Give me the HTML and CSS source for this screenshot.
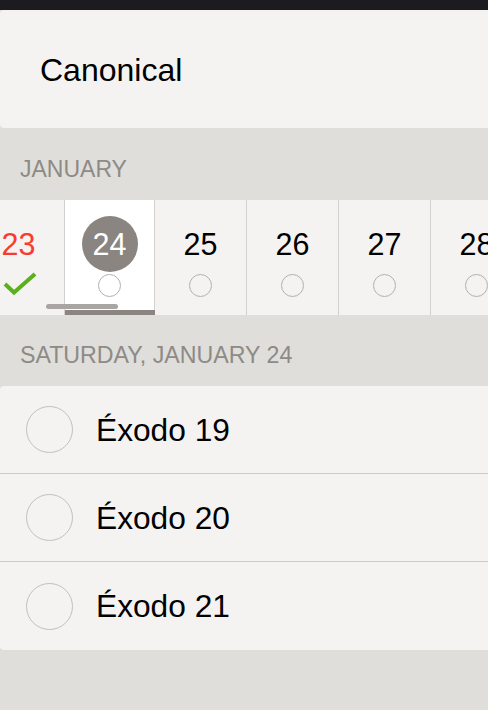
FILE: index.html
```html
<!DOCTYPE html>
<html>
<head>
<meta charset="utf-8">
<link rel="stylesheet" href="styles.css">
</head>
<body>
<div class="topbar"></div>
<div class="title-card"><span class="title">Canonical</span></div>
<div class="section-label">JANUARY</div>
<div class="strip">
  <div class="day">
    <div class="num red">23</div>
    <div class="mark">
      <svg class="check" width="34" height="24" viewBox="0 0 34 24"><path d="M2 12 L11 20.5 L32 2" fill="none" stroke="#5bb11d" stroke-width="4" stroke-linejoin="miter"/></svg>
    </div>
  </div>
  <div class="day selected">
    <div class="num sel"><span class="bubble">24</span></div>
    <div class="mark"><span class="ring"></span></div>
    <div class="underline"></div>
  </div>
  <div class="day">
    <div class="num">25</div>
    <div class="mark"><span class="ring"></span></div>
  </div>
  <div class="day">
    <div class="num">26</div>
    <div class="mark"><span class="ring"></span></div>
  </div>
  <div class="day">
    <div class="num">27</div>
    <div class="mark"><span class="ring"></span></div>
  </div>
  <div class="day">
    <div class="num">28</div>
    <div class="mark"><span class="ring"></span></div>
  </div>
  <div class="scroller"></div>
</div>
<div class="section-label second">SATURDAY, JANUARY 24</div>
<div class="list">
  <div class="row"><span class="circle"></span><span class="label">Éxodo 19</span></div>
  <div class="row"><span class="circle"></span><span class="label">Éxodo 20</span></div>
  <div class="row"><span class="circle"></span><span class="label">Éxodo 21</span></div>
</div>
</body>
</html>
```

FILE: styles.css
```css
html, body {
  margin: 0;
  padding: 0;
}
body {
  width: 488px;
  height: 710px;
  overflow: hidden;
  background: #dfdeda;
  font-family: "Liberation Sans", Arial, sans-serif;
  color: #000;
}
.topbar {
  height: 10px;
  background: #1c1b1f;
}
.title-card {
  height: 118px;
  background: #f4f3f2;
  border-radius: 4px 0 0 4px;
  display: flex;
  align-items: center;
  padding-left: 40px;
}
.title {
  font-size: 32px;
  line-height: 36px;
  position: relative;
  top: 1px;
}
.section-label {
  height: 72px;
  box-sizing: border-box;
  padding: 29px 0 0 20px;
  font-size: 23px;
  line-height: 24px;
  color: #8e8a86;
}
.section-label.second {
  height: 71px;
  font-size: 23.2px;
  padding-top: 28px;
}
.strip {
  position: relative;
  height: 115px;
  display: flex;
  margin-left: -27px;
  width: 560px;
}
.day {
  position: relative;
  flex: 0 0 92px;
  box-sizing: border-box;
  border-right: 1px solid #d3d1ce;
  background: #f4f3f2;
  display: flex;
  flex-direction: column;
  align-items: center;
  padding-top: 16px;
}
.day.selected {
  flex-basis: 90px;
  background: #ffffff;
}
.num {
  height: 56px;
  font-size: 30.5px;
  line-height: 56px;
  text-align: center;
}
.num.red {
  color: #fb3a2f;
}
.bubble {
  display: flex;
  width: 56px;
  height: 56px;
  border-radius: 50%;
  background: #8a8581;
  color: #fff;
  align-items: center;
  justify-content: center;
}
.mark {
  margin-top: 1.5px;
  height: 24px;
  width: 34px;
  display: flex;
  align-items: center;
  justify-content: center;
}
.check {
  display: block;
  position: relative;
  top: -2px;
  left: 1px;
}
.ring {
  width: 23px;
  height: 23px;
  box-sizing: border-box;
  border: 1.6px solid #b3b0ad;
  border-radius: 50%;
}
.underline {
  position: absolute;
  left: 0;
  right: -1px;
  bottom: 0;
  height: 5px;
  background: #8a8581;
}
.scroller {
  position: absolute;
  left: 73px;
  top: 104px;
  width: 72px;
  height: 5px;
  border-radius: 3px;
  background: #a8a5a2;
}
.list {
  background: #f4f3f2;
  border-radius: 4px 0 0 4px;
}
.row {
  height: 88px;
  box-sizing: border-box;
  display: flex;
  align-items: center;
  padding-left: 26px;
  border-bottom: 1px solid #cdcbc8;
}
.row:last-child {
  border-bottom: none;
}
.circle {
  width: 47px;
  height: 47px;
  box-sizing: border-box;
  border: 1.6px solid #c3bfbc;
  border-radius: 50%;
  flex: 0 0 auto;
}
.label {
  margin-left: 23px;
  font-size: 31.7px;
  line-height: 36px;
}
```
